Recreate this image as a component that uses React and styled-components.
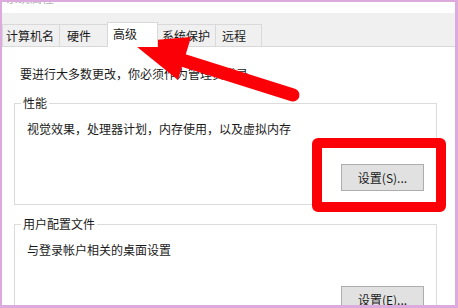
import React from "react";
import styled, { createGlobalStyle } from "styled-components";

const GlobalStyle = createGlobalStyle`
  html, body {
    margin: 0;
    padding: 0;
    background: #ffffff;
  }
  body {
    font-family: "Noto Sans CJK SC", "Microsoft YaHei", sans-serif;
    font-size: 12px;
    color: #1a1a1a;
  }
`;

const Screen = styled.div`
  position: relative;
  width: 458px;
  height: 308px;
  overflow: hidden;
`;

const Frame = styled.div`
  box-sizing: border-box;
  width: 100%;
  height: 100%;
  border-style: solid;
  border-color: #dcaadc;
  border-width: 2px 3px 3px 2px;
  display: flex;
  flex-direction: column;
  overflow: hidden;
  background: #ffffff;
`;

const TitleStrip = styled.div`
  height: 11px;
  flex: none;
  overflow: hidden;
  background: #ffffff;
  padding-left: 4px;
`;

const TitleText = styled.div`
  margin-top: -12px;
  line-height: 16px;
  color: #b4b4b4;
`;

const TabBar = styled.div`
  flex: none;
  height: 33px;
  background: #f0f0f0;
  border-bottom: 1px solid #d9d9d9;
  display: flex;
  align-items: flex-end;
`;

const Tab = styled.div`
  box-sizing: border-box;
  width: ${(p) => p.$w}px;
  height: ${(p) => (p.$active ? 25 : 22)}px;
  margin-left: ${(p) => (p.$first ? 0 : -1)}px;
  margin-bottom: ${(p) => (p.$active ? -1 : 0)}px;
  padding: 3px 0 0 ${(p) => p.$inset}px;
  line-height: 16px;
  border: 1px solid #d9d9d9;
  border-bottom: none;
  background: ${(p) => (p.$active ? "#ffffff" : "#f0f0f0")};
  position: relative;
  z-index: ${(p) => (p.$active ? 1 : 0)};
  white-space: nowrap;
`;

const Page = styled.div`
  flex: 1;
  min-height: 0;
  overflow: hidden;
  background: #ffffff;
  padding: 19px 18px 0 12px;
  display: flex;
  flex-direction: column;
`;

const Intro = styled.div`
  line-height: 16px;
  padding-left: 6px;
`;

const Group = styled.fieldset`
  margin: ${(p) => p.$top}px 0 0 0;
  min-width: 0;
  padding: 0 12px 13px 12px;
  border: 1px solid #dcdcdc;
  display: flex;
  flex-direction: column;
  flex: none;
`;

const Legend = styled.legend`
  margin-left: -6px;
  padding: 0 2px;
  line-height: 16px;
`;

const Desc = styled.div`
  margin-top: 10px;
  line-height: 16px;
`;

const ButtonRow = styled.div`
  display: flex;
  justify-content: flex-end;
  margin-top: ${(p) => p.$gap}px;
`;

const Button = styled.button`
  box-sizing: border-box;
  width: 83px;
  height: 27px;
  background: #e1e1e1;
  border: 1px solid #adadad;
  border-radius: 0;
  font-family: inherit;
  font-size: 12px;
  color: #1a1a1a;
  padding: 0;
`;

const Highlight = styled.div`
  position: absolute;
  left: 312px;
  top: 138px;
  width: 134px;
  height: 74px;
  box-sizing: border-box;
  border: 10px solid #fb0006;
  border-radius: 6px;
  pointer-events: none;
`;

const ArrowLayer = styled.svg`
  position: absolute;
  left: 0;
  top: 0;
  width: 458px;
  height: 308px;
  pointer-events: none;
`;

const tabs = [
  { label: "计算机名", w: 58, inset: 3 },
  { label: "硬件", w: 49, inset: 7 },
  { label: "高级", w: 51, inset: 5, active: true },
  { label: "系统保护", w: 59, inset: 4 },
  { label: "远程", w: 47, inset: 6 },
];

export default function App() {
  return (
    <>
      <GlobalStyle />
      <Screen>
        <Frame>
          <TitleStrip>
            <TitleText>系统属性</TitleText>
          </TitleStrip>
          <TabBar>
            {tabs.map((t, i) => (
              <Tab
                key={t.label}
                $w={t.w}
                $inset={t.inset}
                $first={i === 0}
                $active={t.active}
              >
                {t.label}
              </Tab>
            ))}
          </TabBar>
          <Page>
            <Intro>要进行大多数更改，你必须作为管理员登录。</Intro>
            <Group $top={13}>
              <Legend>性能</Legend>
              <Desc>视觉效果，处理器计划，内存使用，以及虚拟内存</Desc>
              <ButtonRow $gap={27}>
                <Button>设置(S)...</Button>
              </ButtonRow>
            </Group>
            <Group $top={11}>
              <Legend>用户配置文件</Legend>
              <Desc>与登录帐户相关的桌面设置</Desc>
              <ButtonRow $gap={28}>
                <Button>设置(E)...</Button>
              </ButtonRow>
            </Group>
          </Page>
        </Frame>
        <Highlight />
        <ArrowLayer viewBox="0 0 458 308">
          <path
            d="M293 95 L182 60"
            stroke="#fb0006"
            strokeWidth="13"
            strokeLinecap="round"
            fill="none"
          />
          <polygon points="131,42 191,37 178,80" fill="#fb0006" />
        </ArrowLayer>
      </Screen>
    </>
  );
}
